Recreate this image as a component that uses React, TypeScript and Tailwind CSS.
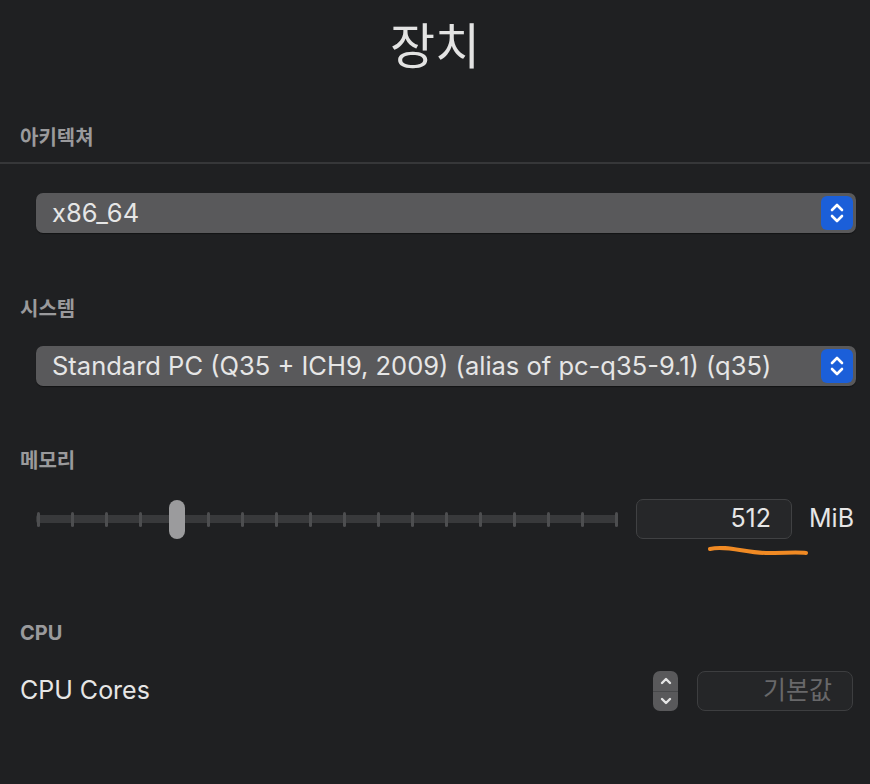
import React from "react";

const font = { fontFamily: 'Inter, "Noto Sans CJK KR", sans-serif' };

function Chevrons({ className = "" }: { className?: string }) {
  return (
    <svg viewBox="0 0 20 28" className={className} fill="none" stroke="currentColor" strokeWidth="2.6" strokeLinecap="round" strokeLinejoin="round">
      <path d="M5 11 L10 6 L15 11" />
      <path d="M5 17 L10 22 L15 17" />
    </svg>
  );
}

function Select({ value }: { value: string }) {
  return (
    <div className="ml-[36px] mr-[14px] h-[40px] rounded-[7px] bg-[#59595b] flex items-center pl-4 pr-[3px] shadow-[0_1px_1px_rgba(0,0,0,0.4)]">
      <span className="flex-1 text-[25.5px] leading-[32px] text-[#e6e6e6] whitespace-nowrap">{value}</span>
      <div className="w-[32px] h-[34px] rounded-[6px] bg-[#1b5fd9] flex items-center justify-center text-white">
        <Chevrons className="w-[20px] h-[28px]" />
      </div>
    </div>
  );
}

function Label({ children }: { children: React.ReactNode }) {
  return <div className="pl-5 text-[20px] font-bold text-[#9a9a9c] leading-[20px]">{children}</div>;
}

export default function App() {
  const ticks = Array.from({ length: 18 }, (_, i) => i);
  return (
    <div style={font} className="w-[870px] h-[784px] bg-[#1f2022] overflow-hidden">
      <div className="pt-[17px] text-center text-[49px] text-[#e3e3e3] leading-[60px]">장치</div>

      <div className="mt-[51px]"><Label>아키텍쳐</Label></div>
      <div className="mt-[14px] h-[2px] bg-[#363739]" />

      <div className="mt-[29px]"><Select value="x86_64" /></div>

      <div className="mt-[66px]"><Label>시스템</Label></div>
      <div className="mt-[27px]"><Select value="Standard PC (Q35 + ICH9, 2009) (alias of pc-q35-9.1) (q35)" /></div>

      <div className="mt-[65px]"><Label>메모리</Label></div>
      <div className="mt-[28px] flex items-center h-[40px]">
        <div className="ml-[36px] w-[582px] h-[40px] relative flex items-center">
          <div className="absolute left-0 right-0 h-[8px] bg-[#38393b] rounded-[2px]" />
          {ticks.map((i) => (
            <div
              key={i}
              className="absolute w-[3px] h-[15px] rounded-full bg-[#4d4e50]"
              style={{ left: 1 + i * 34 - 1.5 + 1 }}
            />
          ))}
          <div className="absolute left-[133px] w-[16px] h-[39px] rounded-full bg-[#9b9b9d]" />
        </div>
        <div className="ml-[18px] w-[156px] h-[40px] rounded-[7px] border border-[#404143] bg-[#262729] flex items-center justify-end pr-[20px] text-[25px] text-[#e6e6e6]">
          512
        </div>
        <div className="ml-[17px] text-[25px] text-[#e6e6e6]">MiB</div>
      </div>
      <div className="flex">
        <svg className="ml-[706px] mt-[3px]" width="104" height="16" viewBox="0 0 104 16">
          <path d="M4 7 C 20 3, 40 11, 60 11 S 92 10, 100 11" stroke="#f08a24" strokeWidth="4" fill="none" strokeLinecap="round" />
        </svg>
      </div>

      <div className="mt-[65px]"><Label>CPU</Label></div>
      <div className="mt-[28px] flex items-center h-[40px] pl-5">
        <span className="flex-1 text-[25px] text-[#e6e6e6]">CPU Cores</span>
        <div className="w-[25px] h-[40px] rounded-[7px] bg-[#59595b] flex flex-col text-[#e6e6e6]">
          <div className="flex-1 flex items-center justify-center border-b border-[#47484a]">
            <svg viewBox="0 0 12 8" className="w-[12px] h-[8px]" fill="none" stroke="currentColor" strokeWidth="2.4" strokeLinecap="round" strokeLinejoin="round"><path d="M2 6 L6 2 L10 6" /></svg>
          </div>
          <div className="flex-1 flex items-center justify-center">
            <svg viewBox="0 0 12 8" className="w-[12px] h-[8px]" fill="none" stroke="currentColor" strokeWidth="2.4" strokeLinecap="round" strokeLinejoin="round"><path d="M2 2 L6 6 L10 2" /></svg>
          </div>
        </div>
        <div className="ml-[19px] mr-[17px] w-[156px] h-[40px] rounded-[8px] border border-[#3d3e40] bg-[#252628] flex items-center justify-end pr-[20px] text-[25px] text-[#68686a]">
          기본값
        </div>
      </div>
    </div>
  );
}
